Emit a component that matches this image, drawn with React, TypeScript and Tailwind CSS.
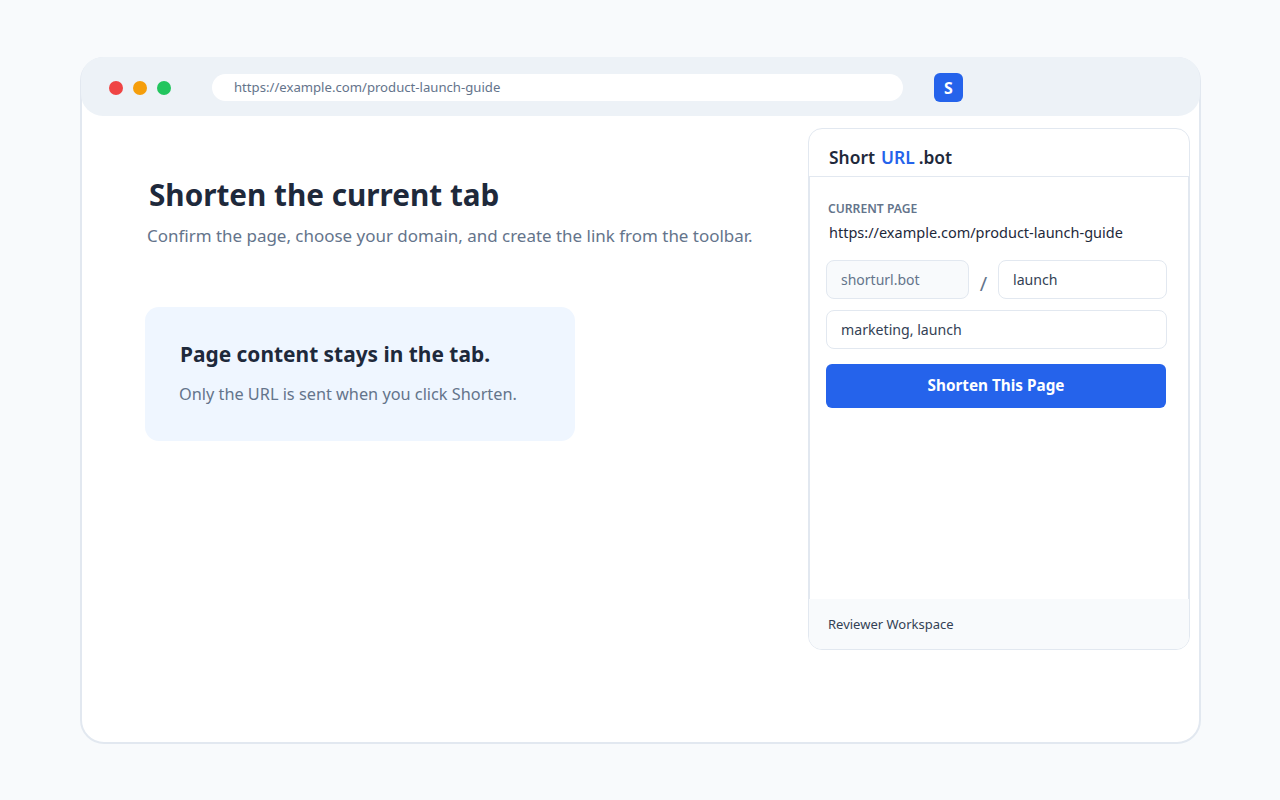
const url = "https://example.com/product-launch-guide"

function Toolbar() {
  return (
    <div className="-mx-[1px] -mt-[2px] flex h-[59px] items-center rounded-[22px] bg-[#edf2f7] pt-[2px] pl-[28px]">
      <div className="flex gap-[10px]">
        <span className="size-[14px] rounded-full bg-[#ef4444]" />
        <span className="size-[14px] rounded-full bg-[#f59e0b]" />
        <span className="size-[14px] rounded-full bg-[#22c55e]" />
      </div>
      <div className="ml-[41px] flex h-[27px] w-[691px] items-center rounded-full bg-white pl-[22px] text-[13.15px] text-[#64748b]">
        {url}
      </div>
      <div className="ml-[31px] flex size-[29px] items-center justify-center rounded-[6px] bg-[#2563eb] text-[16px] font-bold text-white">
        S
      </div>
    </div>
  )
}

function Panel() {
  return (
    <div className="mt-[12px] mr-[9px] flex h-[522px] w-[382px] flex-col overflow-hidden rounded-[14px] border border-[#e2e8f0] bg-white">
      <div className="flex h-[48px] items-center gap-[6px] border-b border-[#e2e8f0] pt-[9px] pl-[20px] text-[17.4px] font-semibold text-[#1e293b]">
        <span>Short</span>
        <span className="text-[#2563eb]">URL</span>
        <span className="-ml-[2px]">.bot</span>
      </div>
      <div className="flex-1 border-x border-[#e2e8f0] px-[16px] pt-[24px]">
        <div className="pl-[2px] text-[12.15px] leading-[16px] font-semibold text-[#64748b]">CURRENT PAGE</div>
        <div className="mt-[5px] pl-[3px] text-[14.5px] leading-[20px] text-[#1e293b]">{url}</div>
        <div className="mt-[18px] flex items-center">
          <div className="flex h-[39px] w-[143px] items-center rounded-[8px] border border-[#e2e8f0] bg-[#f8fafc] pl-[14px] text-[14px] text-[#64748b]">
            shorturl.bot
          </div>
          <span className="w-[29px] pt-[9px] text-center text-[20px] leading-none text-[#64748b]">/</span>
          <div className="flex h-[39px] w-[169px] items-center rounded-[8px] border border-[#e2e8f0] pl-[14px] text-[14.15px] text-[#334155]">
            launch
          </div>
        </div>
        <div className="mt-[11px] flex h-[39px] w-[341px] items-center rounded-[8px] border border-[#e2e8f0] pl-[14px] text-[14.15px] text-[#334155]">
          marketing, launch
        </div>
        <button className="mt-[15px] h-[44px] w-[340px] rounded-[6px] bg-[#2563eb] pb-[2px] text-[15.3px] font-bold text-white">
          Shorten This Page
        </button>
      </div>
      <div className="flex h-[50px] items-center bg-[#f8fafc] pt-[1px] pl-[19px] text-[13px] text-[#334155]">
        Reviewer Workspace
      </div>
    </div>
  )
}

export default function App() {
  return (
    <div className="h-[800px] bg-[#f8fafc] px-[80px] pt-[57px] font-['Noto_Sans',sans-serif]">
      <div className="h-[687px] w-[1121px] rounded-[24px] border-2 border-[#e2e8f0] bg-white">
        <Toolbar />
        <div className="flex justify-between">
          <div className="pt-[57px] pl-[63px]">
            <h1 className="pl-[4px] text-[29.7px] leading-[44px] font-bold text-[#1e293b]">Shorten the current tab</h1>
            <p className="mt-[7px] pl-[2px] text-[16.97px] leading-[24px] text-[#64748b]">
              Confirm the page, choose your domain, and create the link from the toolbar.
            </p>
            <div className="mt-[59px] flex h-[134px] w-[430px] flex-col rounded-[14px] bg-[#eff6ff] pt-[31px] pl-[34px]">
              <h2 className="pl-[1px] text-[20.9px] leading-[32px] font-bold text-[#1e293b]">Page content stays in the tab.</h2>
              <p className="mt-[12px] text-[16.3px] leading-[24px] text-[#64748b]">Only the URL is sent when you click Shorten.</p>
            </div>
          </div>
          <Panel />
        </div>
      </div>
    </div>
  )
}
